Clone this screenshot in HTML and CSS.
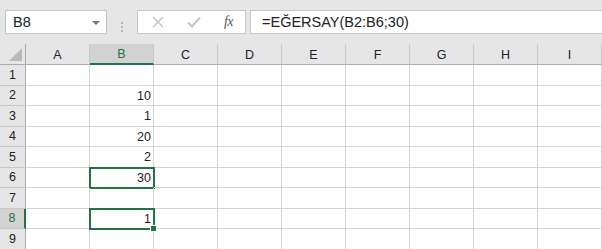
FILE: index.html
```html
<!DOCTYPE html>
<html lang="tr">
<head>
   <meta charset="UTF-8">
   <title>EĞERSAY</title>
   <link rel="stylesheet" href="styles.css">
</head>
<body>
   <div class="toolbar">
       <div class="namebox">
           <span>B8</span>
           <span class="caret"></span>
       </div>
       <div class="grip"><i></i><i></i><i></i></div>
       <div class="fx-buttons">
           <svg class="btn-icon" width="12" height="12" viewBox="0 0 12 12"><path d="M1 1L11 11M11 1L1 11" stroke="#c4c4c4" stroke-width="1.4" fill="none"/></svg>
           <svg class="btn-icon" width="14" height="12" viewBox="0 0 14 12"><path d="M1 6.5L5 10.5L13 1.5" stroke="#c4c4c4" stroke-width="2" fill="none"/></svg>
           <span class="fx">fx</span>
       </div>
       <div class="formula">=EĞERSAY(B2:B6;30)</div>
   </div>
   <div class="sheet">
       <div class="corner"><span class="tri"></span></div>
       <div class="col-head">A</div>
       <div class="col-head active">B</div>
       <div class="col-head">C</div>
       <div class="col-head">D</div>
       <div class="col-head">E</div>
       <div class="col-head">F</div>
       <div class="col-head">G</div>
       <div class="col-head">H</div>
       <div class="col-head">I</div>

       <div class="row-head">1</div>
       <div class="cell"></div><div class="cell"></div><div class="cell"></div><div class="cell"></div><div class="cell"></div><div class="cell"></div><div class="cell"></div><div class="cell"></div><div class="cell"></div>

       <div class="row-head">2</div>
       <div class="cell"></div><div class="cell">10</div><div class="cell"></div><div class="cell"></div><div class="cell"></div><div class="cell"></div><div class="cell"></div><div class="cell"></div><div class="cell"></div>

       <div class="row-head">3</div>
       <div class="cell"></div><div class="cell">1</div><div class="cell"></div><div class="cell"></div><div class="cell"></div><div class="cell"></div><div class="cell"></div><div class="cell"></div><div class="cell"></div>

       <div class="row-head">4</div>
       <div class="cell"></div><div class="cell">20</div><div class="cell"></div><div class="cell"></div><div class="cell"></div><div class="cell"></div><div class="cell"></div><div class="cell"></div><div class="cell"></div>

       <div class="row-head">5</div>
       <div class="cell"></div><div class="cell">2</div><div class="cell"></div><div class="cell"></div><div class="cell"></div><div class="cell"></div><div class="cell"></div><div class="cell"></div><div class="cell"></div>

       <div class="row-head">6</div>
       <div class="cell"></div><div class="cell range">30</div><div class="cell"></div><div class="cell"></div><div class="cell"></div><div class="cell"></div><div class="cell"></div><div class="cell"></div><div class="cell"></div>

       <div class="row-head">7</div>
       <div class="cell"></div><div class="cell"></div><div class="cell"></div><div class="cell"></div><div class="cell"></div><div class="cell"></div><div class="cell"></div><div class="cell"></div><div class="cell"></div>

       <div class="row-head active">8</div>
       <div class="cell"></div><div class="cell current">1</div><div class="cell"></div><div class="cell"></div><div class="cell"></div><div class="cell"></div><div class="cell"></div><div class="cell"></div><div class="cell"></div>

       <div class="row-head">9</div>
       <div class="cell"></div><div class="cell"></div><div class="cell"></div><div class="cell"></div><div class="cell"></div><div class="cell"></div><div class="cell"></div><div class="cell"></div><div class="cell"></div>
   </div>
</body>
</html>
```

FILE: styles.css
```css
body {
    margin: 0;
    background: #e6e6e6;
    font-family: "Liberation Sans", Arial, sans-serif;
    color: #222;
    overflow: hidden;
}
.toolbar {
    display: flex;
    height: 44px;
    padding: 10px 0 0 5px;
    box-sizing: border-box;
}
.namebox, .fx-buttons, .formula {
    height: 24px;
    background: #fff;
    border: 1px solid #c6c6c6;
    box-sizing: border-box;
    display: flex;
    align-items: center;
}
.namebox {
    width: 102px;
    padding: 0 6px 0 7px;
    font-size: 14.5px;
    justify-content: space-between;
}
.caret {
    width: 0;
    height: 0;
    border-left: 4px solid transparent;
    border-right: 4px solid transparent;
    border-top: 4px solid #777;
    margin-top: 1px;
}
.grip {
    width: 30px;
    display: flex;
    flex-direction: column;
    align-items: center;
    justify-content: center;
    gap: 2px;
}
.grip i {
    width: 2px;
    height: 2px;
    background: #b4b4b4;
}
.fx-buttons {
    width: 109px;
    padding: 0 12px 0 14px;
    justify-content: space-between;
}
.fx {
    font-family: "Liberation Serif", serif;
    font-style: italic;
    font-size: 14px;
    color: #555;
    letter-spacing: -0.5px;
}
.formula {
    flex: 1;
    margin-left: 4px;
    border-right: none;
    padding-left: 11px;
    font-size: 14.5px;
}
.sheet {
    display: grid;
    grid-template-columns: 26px repeat(9, 64px);
    grid-template-rows: 21px;
    grid-auto-rows: 20.5px;
    background: #fff;
    font-size: 12.5px;
}
.sheet > div {
    box-sizing: border-box;
    border-right: 1px solid #d4d4d4;
    border-bottom: 1px solid #d4d4d4;
}
.sheet > .corner {
    background: #e6e6e6;
    border-right: 1px solid #ababab;
    border-bottom: 1px solid #ababab;
    position: relative;
}
.tri {
    position: absolute;
    right: 3px;
    bottom: 3px;
    width: 0;
    height: 0;
    border-left: 13px solid transparent;
    border-bottom: 13px solid #b9b9b9;
}
.sheet > .col-head {
    background: #e6e6e6;
    border-right: 1px solid #c8c8c8;
    border-bottom: 1px solid #ababab;
    display: flex;
    align-items: center;
    justify-content: center;
    padding-top: 1px;
}
.sheet > .row-head {
    background: #e6e6e6;
    border-right: 1px solid #ababab;
    border-bottom: 1px solid #c8c8c8;
    display: flex;
    align-items: center;
    justify-content: center;
}
.sheet > .col-head.active {
    background: #d2d2d2;
    color: #217346;
    border-bottom: 2px solid #217346;
}
.sheet > .row-head.active {
    background: #d2d2d2;
    color: #217346;
    border-right: 2px solid #217346;
}
.cell {
    display: flex;
    align-items: center;
    justify-content: flex-end;
    padding: 1px 2px 0 0;
}
.range, .current {
    outline: 2px solid #217346;
    outline-offset: -1px;
}
.current {
    position: relative;
}
.current::after {
    content: "";
    position: absolute;
    right: -4px;
    bottom: -4px;
    width: 5px;
    height: 5px;
    background: #217346;
    border: 1px solid #fff;
}
```
